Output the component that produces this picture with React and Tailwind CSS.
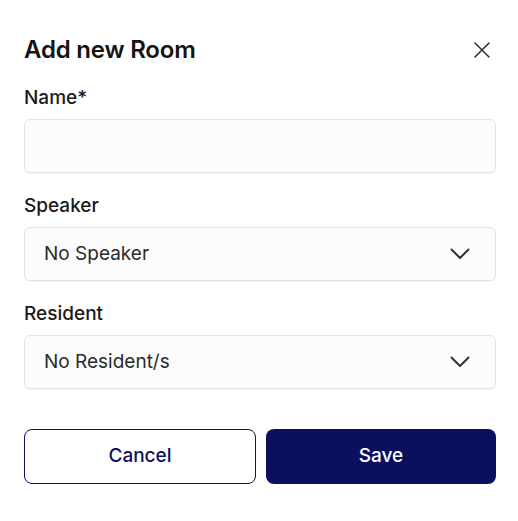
import { useState } from 'react'

const font = { fontFamily: 'Inter, "Noto Sans", sans-serif' }

function Chevron() {
  return (
    <svg width="20" height="12" viewBox="0 0 20 12" fill="none" className="shrink-0">
      <polyline points="1.5,1.5 10,10 18.5,1.5" stroke="#2f3237" strokeWidth="2" strokeLinecap="round" strokeLinejoin="round" />
    </svg>
  )
}

function SelectBox({ value }) {
  return (
    <button className="flex h-[54px] w-full items-center justify-between rounded-md border border-[#e3e3e3] bg-[#fcfcfc] pl-[19px] pr-[25px] text-left text-[19px] text-[#2a2a2a] shadow-[0_1px_1px_rgba(0,0,0,0.04)]">
      <span>{value}</span>
      <Chevron />
    </button>
  )
}

export default function App() {
  const [name, setName] = useState('')

  return (
    <div className="min-h-screen bg-white pl-6 pr-[22px] pt-[34px] text-[#1a1a1a]" style={font}>
      {/* Header */}
      <div className="flex items-center justify-between">
        <h2 className="text-[24px] font-semibold leading-8 tracking-[-0.2px] text-[#141414]">Add new Room</h2>
        <button className="flex h-8 w-8 items-center justify-center -mr-[2px]" aria-label="Close">
          <svg width="16" height="16" viewBox="0 0 16 16" fill="none">
            <path d="M1 1L15 15M15 1L1 15" stroke="#333" strokeWidth="1.6" strokeLinecap="round" />
          </svg>
        </button>
      </div>

      {/* Fields */}
      <div className="mt-[19px] flex flex-col gap-5">
        <div>
          <label className="mb-2 block text-[19px] font-medium leading-[26px]">Name*</label>
          <input
            value={name}
            onChange={(e) => setName(e.target.value)}
            className="h-[54px] w-full rounded-md border border-[#e3e3e3] bg-[#fcfcfc] px-5 text-lg outline-none shadow-[0_1px_1px_rgba(0,0,0,0.04)]"
          />
        </div>
        <div>
          <label className="mb-2 block text-[19px] font-medium leading-[26px]">Speaker</label>
          <SelectBox value="No Speaker" />
        </div>
        <div>
          <label className="mb-2 block text-[19px] font-medium leading-[26px]">Resident</label>
          <SelectBox value="No Resident/s" />
        </div>
      </div>

      {/* Actions */}
      <div className="mt-10 flex gap-[10px]">
        <button className="h-[55px] flex-1 rounded-lg border border-[#0b115f] bg-white text-[19px] font-medium text-[#0b115f]">
          Cancel
        </button>
        <button className="h-[55px] flex-1 rounded-lg bg-[#0a105e] text-[19px] font-medium text-white">
          Save
        </button>
      </div>
    </div>
  )
}
